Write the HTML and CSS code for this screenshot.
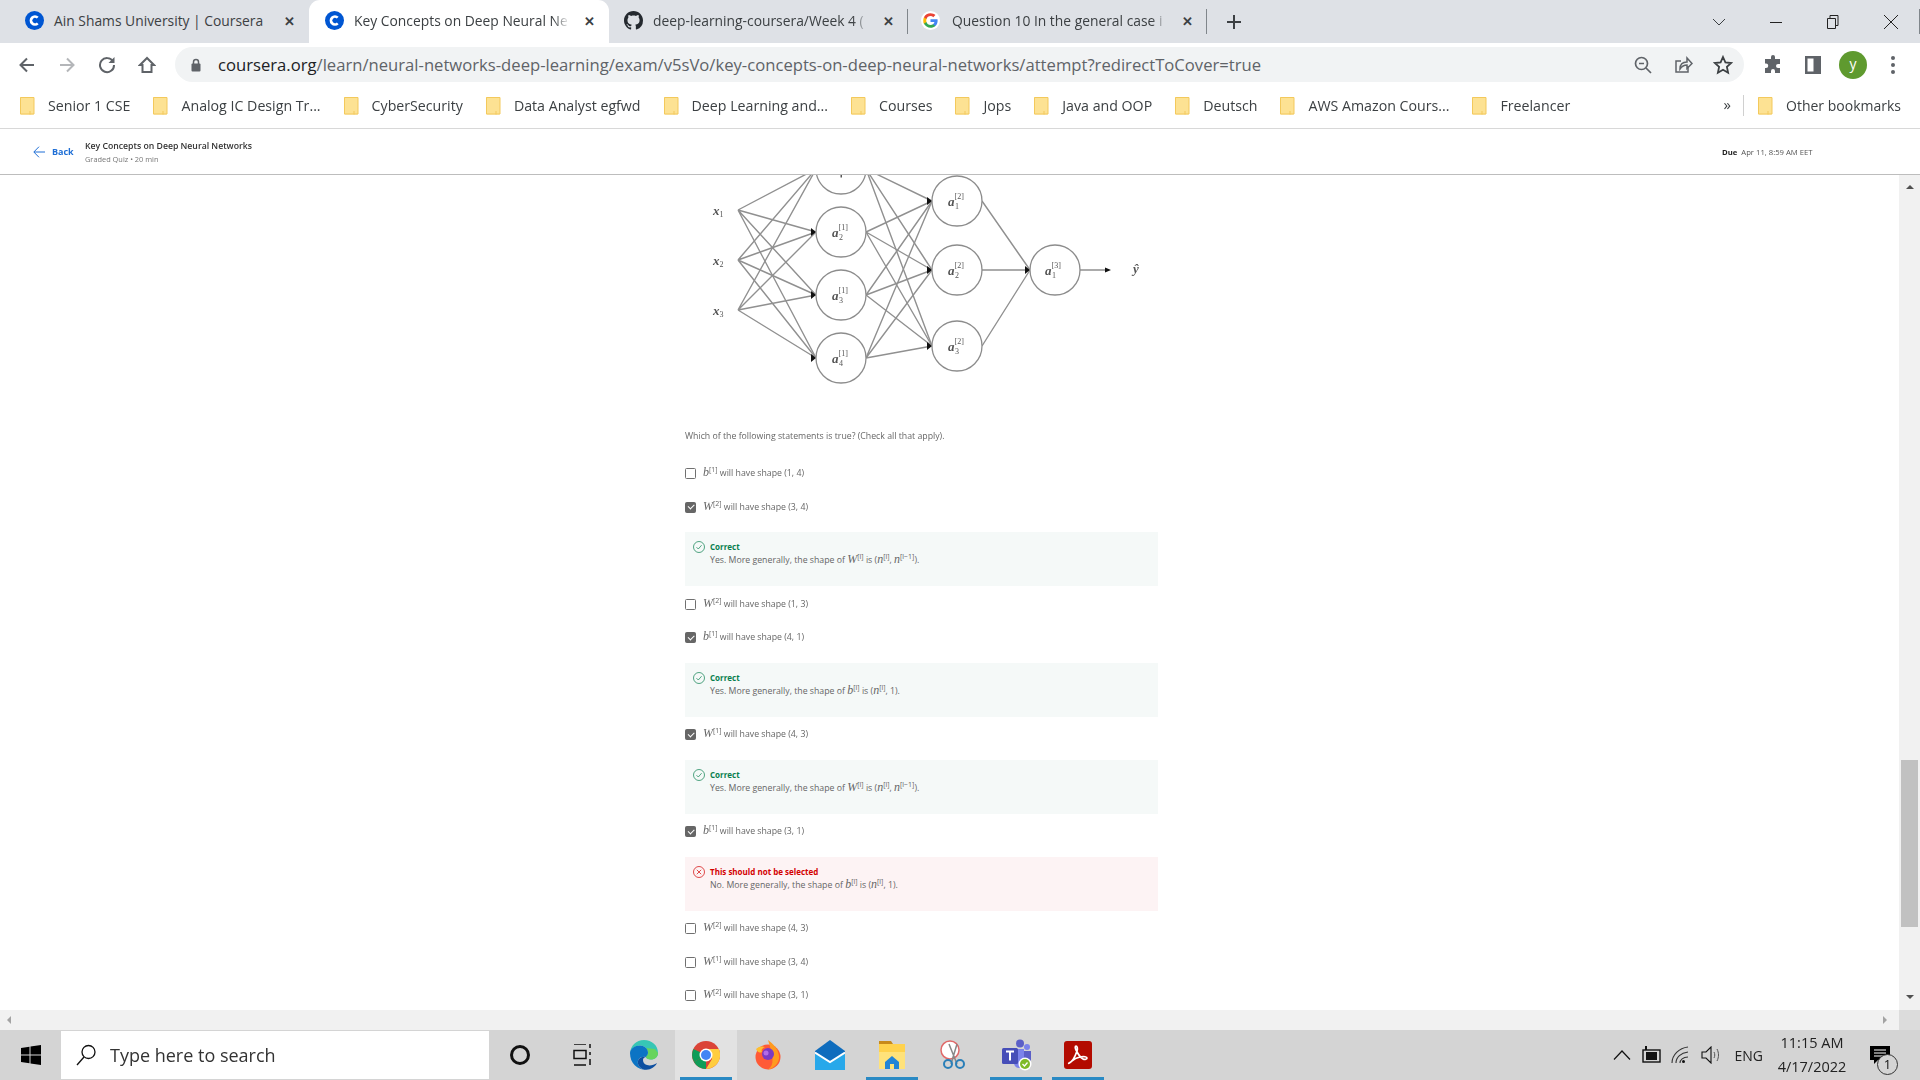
FILE: index.html
```html
<!DOCTYPE html>
<html>
<head>
    <meta charset="UTF-8">
    <title>Key Concepts on Deep Neural Networks | Coursera</title>
    <link rel="stylesheet" href="styles.css">
</head>
<body>
    <svg class="defs" width="0" height="0">
        <symbol id="i-coursera" viewBox="0 0 20 20"><circle cx="10" cy="10" r="10" fill="#0056d2"/><path d="M13.4 7a4.2 4.2 0 1 0 0 6" fill="none" stroke="#fff" stroke-width="2.8"/></symbol>
        <symbol id="i-folder" viewBox="0 0 15 18"><path d="M1 0h8l5 0v16.500q0 1-1 1H1q-1 0-1-1V1q0-1 1-1z" fill="#fde293"/><path d="M.5.500h13.500v16.500H.5zM10 14v3.500" fill="none" stroke="#f3c95c"/></symbol>
    </svg>

    <!-- tab strip -->
    <div class="tabstrip">
        <div class="tab">
            <svg class="favicon"><use href="#i-coursera"/></svg>
            <span class="tab-title tab-title-full">Ain Shams University | Coursera</span>
            <span class="tab-close">✕</span>
        </div>
        <div class="tab tab-active">
            <svg class="favicon"><use href="#i-coursera"/></svg>
            <span class="tab-title">Key Concepts on Deep Neural Ne</span>
            <span class="tab-close">✕</span>
        </div>
        <div class="tab tab-sep">
            <svg class="favicon" viewBox="0 0 16 16"><path fill="#24292f" d="M8 0C3.580 0 0 3.580 0 8c0 3.540 2.290 6.530 5.470 7.590.4.070.55-.17.55-.38 0-.19-.01-.82-.01-1.490-2.010.37-2.530-.49-2.690-.94-.09-.23-.48-.94-.82-1.130-.28-.15-.68-.52-.01-.53.63-.01 1.080.58 1.230.82.72 1.210 1.870.87 2.330.66.07-.52.28-.87.51-1.070-1.780-.2-3.640-.89-3.640-3.950 0-.87.31-1.590.82-2.150-.08-.2-.36-1.020.08-2.120 0 0 .67-.21 2.200.82.64-.18 1.320-.27 2-.27.68 0 1.360.09 2 .27 1.530-1.040 2.200-.82 2.200-.82.44 1.100.16 1.920.08 2.120.51.56.82 1.270.82 2.150 0 3.070-1.870 3.750-3.650 3.950.29.25.54.73.54 1.480 0 1.070-.01 1.930-.01 2.200 0 .21.15.46.55.38A8.013 8.013 0 0 0 16 8c0-4.420-3.580-8-8-8z"/></svg>
            <span class="tab-title">deep-learning-coursera/Week 4 (</span>
            <span class="tab-close">✕</span>
        </div>
        <div class="tab tab-sep tab-google">
            <svg class="favicon" viewBox="0 0 24 24"><circle cx="12" cy="12" r="12" fill="#fff"/><path fill="#4285f4" d="M21 12.200c0-.7-.06-1.300-.18-1.900H12v3.600h5c-.2 1.200-.9 2.100-1.900 2.800v2.300h3.100C20 17.300 21 15 21 12.200z"/><path fill="#34a853" d="M12 21.200c2.500 0 4.600-.8 6.200-2.200l-3.100-2.300c-.8.6-1.900.9-3.100.9-2.400 0-4.400-1.600-5.100-3.800H3.700v2.400c1.600 3 4.700 5 8.300 5z"/><path fill="#fbbc05" d="M6.900 13.800c-.4-1.100-.4-2.400 0-3.600V7.800H3.700c-1.100 2.100-1.100 6.300 0 8.400z"/><path fill="#ea4335" d="M12 6.400c1.400 0 2.600.5 3.500 1.400l2.700-2.700C16.600 3.700 14.500 2.800 12 2.800c-3.600 0-6.700 2-8.300 5l3.200 2.400c.7-2.200 2.700-3.800 5.100-3.800z"/></svg>
            <span class="tab-title">Question 10 In the general case i</span>
            <span class="tab-close">✕</span>
        </div>
        <div class="tab-new tab-sep-left">
            <svg width="16" height="16" viewBox="0 0 16 16"><path d="M8 1v14M1 8h14" stroke="#3c4043" stroke-width="2"/></svg>
        </div>
        <div class="win-buttons">
            <svg class="win-caret" width="14" height="8" viewBox="0 0 14 8"><path d="M1 1l6 6 6-6" fill="none" stroke="#3c4043"/></svg>
            <svg class="win-btn" width="14" height="14" viewBox="0 0 14 14"><path d="M1 7.500h12" stroke="#222"/></svg>
            <svg class="win-btn" width="14" height="14" viewBox="0 0 14 14"><path d="M1.500 3.500h8v10h-8zM4 3.500V.5h8v10H9.500" fill="none" stroke="#222"/></svg>
            <svg class="win-btn" width="16" height="16" viewBox="0 0 16 16"><path d="M1 1l14 14M15 1L1 15" stroke="#222"/></svg>
        </div>
    </div>

    <!-- address bar -->
    <div class="toolbar">
        <div class="tool"><svg width="18" height="18" viewBox="0 0 18 18"><path d="M16 9H3M9 2.500L2.500 9 9 15.500" fill="none" stroke="#5f6368" stroke-width="2"/></svg></div>
        <div class="tool"><svg width="18" height="18" viewBox="0 0 18 18"><path d="M2 9h13M9 2.500L15.500 9 9 15.500" fill="none" stroke="#b4b6b9" stroke-width="2"/></svg></div>
        <div class="tool"><svg width="18" height="18" viewBox="0 0 18 18"><path d="M15 5.500A7 7 0 1 0 16 9" fill="none" stroke="#5f6368" stroke-width="2"/><path d="M16.500 1v6h-6z" fill="#5f6368"/></svg></div>
        <div class="tool"><svg width="18" height="18" viewBox="0 0 18 18"><path d="M9 2L2 9h2.500v7h9V9H16z" fill="none" stroke="#5f6368" stroke-width="2"/></svg></div>
        <div class="omnibox">
            <svg class="lock" width="12" height="14" viewBox="0 0 12 14"><path d="M3.500 6V4a2.500 2.500 0 0 1 5 0v2" fill="none" stroke="#5f6368" stroke-width="1.500"/><rect x="1.500" y="5.500" width="9" height="8" rx="1" fill="#5f6368"/></svg>
            <span class="url"><span class="url-host">coursera.org</span>/learn/neural-networks-deep-learning/exam/v5sVo/key-concepts-on-deep-neural-networks/attempt?redirectToCover=true</span>
            <div class="tool"><svg width="20" height="20" viewBox="0 0 20 20"><circle cx="8.500" cy="8.500" r="6" fill="none" stroke="#5f6368" stroke-width="1.700"/><path d="M13 13l5 5M6 8.500h5" stroke="#5f6368" stroke-width="1.700"/></svg></div>
            <div class="tool"><svg width="20" height="20" viewBox="0 0 20 20"><path d="M15 11v6H3V6h5" fill="none" stroke="#5f6368" stroke-width="1.500"/><path d="M7 14c0-5 3-7 7-7V3l5 5.500-5 5V10c-3 0-5 1-7 4z" fill="none" stroke="#5f6368" stroke-width="1.500"/></svg></div>
            <div class="tool"><svg width="20" height="20" viewBox="0 0 20 20"><path d="M10 2l2.400 5.400 5.800.6-4.300 3.900 1.200 5.800L10 14.800l-5.100 2.900 1.200-5.800L1.800 8l5.800-.6z" fill="none" stroke="#3c4043" stroke-width="1.800"/></svg></div>
        </div>
        <div class="tool"><svg width="20" height="20" viewBox="0 0 20 20"><path fill="#5f6368" d="M8 2a2 2 0 0 1 4 0v2h5v5h-2a2 2 0 0 0 0 4h2v5h-5v-2a2 2 0 0 0-4 0v2H2v-5h1a2.200 2.200 0 0 0 0-4.500H2V4h6z"/></svg></div>
        <div class="tool"><svg width="18" height="20" viewBox="0 0 18 20"><path fill="#5f6368" d="M1 1h16v18H1zm2.500 2.500v13h6v-13z"/></svg></div>
        <div class="tool"><span class="avatar">y</span></div>
        <div class="tool"><svg width="4" height="18" viewBox="0 0 4 18"><circle cx="2" cy="2" r="2" fill="#5f6368"/><circle cx="2" cy="9" r="2" fill="#5f6368"/><circle cx="2" cy="16" r="2" fill="#5f6368"/></svg></div>
    </div>

    <!-- bookmarks -->
    <div class="bookmarks">
        <div class="bookmark"><svg class="folder"><use href="#i-folder"/></svg>Senior 1 CSE</div>
        <div class="bookmark"><svg class="folder"><use href="#i-folder"/></svg>Analog IC Design Tr...</div>
        <div class="bookmark"><svg class="folder"><use href="#i-folder"/></svg>CyberSecurity</div>
        <div class="bookmark"><svg class="folder"><use href="#i-folder"/></svg>Data Analyst egfwd</div>
        <div class="bookmark"><svg class="folder"><use href="#i-folder"/></svg>Deep Learning and...</div>
        <div class="bookmark"><svg class="folder"><use href="#i-folder"/></svg>Courses</div>
        <div class="bookmark"><svg class="folder"><use href="#i-folder"/></svg>Jops</div>
        <div class="bookmark"><svg class="folder"><use href="#i-folder"/></svg>Java and OOP</div>
        <div class="bookmark"><svg class="folder"><use href="#i-folder"/></svg>Deutsch</div>
        <div class="bookmark"><svg class="folder"><use href="#i-folder"/></svg>AWS Amazon Cours...</div>
        <div class="bookmark"><svg class="folder"><use href="#i-folder"/></svg>Freelancer</div>
        <div class="bookmark-more">»</div>
        <div class="bookmark bookmark-other"><svg class="folder"><use href="#i-folder"/></svg>Other bookmarks</div>
    </div>

    <!-- quiz header -->
    <div class="course-head">
        <a class="back"><svg width="12" height="12" viewBox="0 0 12 12"><path d="M12 6H1M6 .7L.8 6 6 11.300" fill="none" stroke="#1f6fd6"/></svg>Back</a>
        <div class="course-info">
            <div class="course-title">Key Concepts on Deep Neural Networks</div>
            <div class="course-sub">Graded Quiz • 20 min</div>
        </div>
        <div class="due"><b>Due</b> Apr 11, 8:59 AM EET</div>
    </div>

    <div class="view">
        <div class="scroll-area">
            <div class="question">
                <svg class="network" width="480" height="240" viewBox="680 175 480 240">
                    <g class="edges">
                        <path d="M738 210L816 169M738 210L816 232M738 210L816 295M738 210L816 358"/>
                        <path d="M738 260L816 169M738 260L816 232M738 260L816 295M738 260L816 358"/>
                        <path d="M738 310L816 169M738 310L816 232M738 310L816 295M738 310L816 358"/>
                        <path d="M866 169L932 201M866 169L932 270M866 169L932 346"/>
                        <path d="M866 232L932 201M866 232L932 270M866 232L932 346"/>
                        <path d="M866 295L932 201M866 295L932 270M866 295L932 346"/>
                        <path d="M866 358L932 201M866 358L932 270M866 358L932 346"/>
                        <path d="M982 201L1030 270M982 270L1030 270M982 346L1030 270M1080 270H1106"/>
                    </g>
                    <g class="heads">
                        <path d="M811 228l5 4-5 4zM811 291l5 4-5 4zM811 354l5 4-5 4z"/>
                        <path d="M927 197l5 4-5 4zM927 266l5 4-5 4zM927 342l5 4-5 4z"/>
                        <path d="M1025 266l5 4-5 4zM1105 267.500l6 2.500-6 2.500z"/>
                    </g>
                    <g class="nodes">
                        <circle cx="841" cy="169" r="25"/>
                        <circle cx="841" cy="232" r="25"/>
                        <circle cx="841" cy="295" r="25"/>
                        <circle cx="841" cy="358" r="25"/>
                        <circle cx="957" cy="201" r="25"/>
                        <circle cx="957" cy="270" r="25"/>
                        <circle cx="957" cy="346" r="25"/>
                        <circle cx="1055" cy="270" r="25"/>
                    </g>
                    <rect x="840.500" y="175" width="1.500" height="2.500" fill="#555"/>
                    <g class="labels">
                        <text x="713" y="215">x<tspan class="lab-sm" dy="2">1</tspan></text>
                        <text x="713" y="265">x<tspan class="lab-sm" dy="2">2</tspan></text>
                        <text x="713" y="315">x<tspan class="lab-sm" dy="2">3</tspan></text>
                        <text x="832" y="237">a<tspan class="lab-sm" dy="-7">[1]</tspan></text><text class="lab-sm" x="839" y="240">2</text>
                        <text x="832" y="300">a<tspan class="lab-sm" dy="-7">[1]</tspan></text><text class="lab-sm" x="839" y="303">3</text>
                        <text x="832" y="363">a<tspan class="lab-sm" dy="-7">[1]</tspan></text><text class="lab-sm" x="839" y="366">4</text>
                        <text x="948" y="206">a<tspan class="lab-sm" dy="-7">[2]</tspan></text><text class="lab-sm" x="955" y="209">1</text>
                        <text x="948" y="275">a<tspan class="lab-sm" dy="-7">[2]</tspan></text><text class="lab-sm" x="955" y="278">2</text>
                        <text x="948" y="351">a<tspan class="lab-sm" dy="-7">[2]</tspan></text><text class="lab-sm" x="955" y="354">3</text>
                        <text x="1045" y="275">a<tspan class="lab-sm" dy="-7">[3]</tspan></text><text class="lab-sm" x="1052" y="278">1</text>
                        <text x="1133" y="273">ŷ</text>
                    </g>
                </svg>
                <p class="prompt">Which of the following statements is true? (Check all that apply).</p>

                <label class="option"><span class="check"></span><span><i>b</i><sup>[1]</sup> will have shape (1, 4)</span></label>
                <label class="option"><span class="check checked"></span><span><i>W</i><sup>[2]</sup> will have shape (3, 4)</span></label>
                <div class="feedback ok">
                    <svg class="fb-icon" viewBox="0 0 12 12"><circle cx="6" cy="6" r="5.500"/><path d="M3.500 6.200l1.800 1.800 3.300-3.800"/></svg>
                    <div class="fb-title">Correct</div>
                    <div class="fb-text">Yes. More generally, the shape of <i>W</i><sup>[l]</sup> is (<i>n</i><sup>[l]</sup>, <i>n</i><sup>[l−1]</sup>).</div>
                </div>
                <label class="option"><span class="check"></span><span><i>W</i><sup>[2]</sup> will have shape (1, 3)</span></label>
                <label class="option"><span class="check checked"></span><span><i>b</i><sup>[1]</sup> will have shape (4, 1)</span></label>
                <div class="feedback ok">
                    <svg class="fb-icon" viewBox="0 0 12 12"><circle cx="6" cy="6" r="5.500"/><path d="M3.500 6.200l1.800 1.800 3.300-3.800"/></svg>
                    <div class="fb-title">Correct</div>
                    <div class="fb-text">Yes. More generally, the shape of <i>b</i><sup>[l]</sup> is (<i>n</i><sup>[l]</sup>, 1).</div>
                </div>
                <label class="option"><span class="check checked"></span><span><i>W</i><sup>[1]</sup> will have shape (4, 3)</span></label>
                <div class="feedback ok">
                    <svg class="fb-icon" viewBox="0 0 12 12"><circle cx="6" cy="6" r="5.500"/><path d="M3.500 6.200l1.800 1.800 3.300-3.800"/></svg>
                    <div class="fb-title">Correct</div>
                    <div class="fb-text">Yes. More generally, the shape of <i>W</i><sup>[l]</sup> is (<i>n</i><sup>[l]</sup>, <i>n</i><sup>[l−1]</sup>).</div>
                </div>
                <label class="option"><span class="check checked"></span><span><i>b</i><sup>[1]</sup> will have shape (3, 1)</span></label>
                <div class="feedback bad">
                    <svg class="fb-icon" viewBox="0 0 12 12"><circle cx="6" cy="6" r="5.500"/><path d="M3.800 3.800l4.400 4.400M8.200 3.800L3.800 8.200"/></svg>
                    <div class="fb-title">This should not be selected</div>
                    <div class="fb-text">No. More generally, the shape of <i>b</i><sup>[l]</sup> is (<i>n</i><sup>[l]</sup>, 1).</div>
                </div>
                <label class="option"><span class="check"></span><span><i>W</i><sup>[2]</sup> will have shape (4, 3)</span></label>
                <label class="option"><span class="check"></span><span><i>W</i><sup>[1]</sup> will have shape (3, 4)</span></label>
                <label class="option"><span class="check"></span><span><i>W</i><sup>[2]</sup> will have shape (3, 1)</span></label>
            </div>
        </div>
        <div class="vscroll">
            <span class="arrow-up"></span>
            <span class="thumb"></span>
            <span class="arrow-down"></span>
        </div>
    </div>
    <div class="hscroll">
        <span class="arrow-left"></span>
        <span class="arrow-right"></span>
        <span class="corner"></span>
    </div>

    <!-- windows taskbar -->
    <div class="taskbar">
        <div class="start"><svg width="20" height="20" viewBox="0 0 20 20"><path d="M0 3l8.500-1.300V9.500H0zM9.500 1.500L20 0v9.500H9.500zM0 10.500h8.500v7.800L0 17zM9.500 10.500H20V20L9.500 18.500z" fill="#000"/></svg></div>
        <div class="search">
            <svg width="24" height="24" viewBox="0 0 24 24"><circle cx="14.500" cy="9" r="6.500" fill="none" stroke="#111" stroke-width="1.300"/><path d="M10 14L3 22" stroke="#111" stroke-width="1.300"/></svg>
            <span>Type here to search</span>
        </div>
        <div class="slot"><svg width="22" height="22" viewBox="0 0 22 22"><circle cx="11" cy="11" r="8.500" fill="none" stroke="#111" stroke-width="3"/></svg></div>
        <div class="slot"><svg width="22" height="22" viewBox="0 0 22 22"><path d="M3 0h12M3 21h12M3 6.500h12v8H3zM19 0v4M19 8v3M19 15v6" fill="none" stroke="#111" stroke-width="1.500"/></svg></div>
        <div class="slot"><svg width="30" height="30" viewBox="0 0 30 30"><path d="M15 0c8 0 14 5.500 14 13 0 4-3 6.500-7 6.500-3 0-5-1-5-2.500 0-1 2-1.500 2-4.500 0-4-4-7-8-7C6 5.500 1 10 1 13 2 5.500 7 0 15 0z" fill="#37c6b5"/><path d="M29 13c0 3-2.500 6.500-7 6.500-3 0-5-1-5-2.500 0-1 2-1.500 2-4.500 0-2-1-3.500-2-4.500l9 1z" fill="#67d45e"/><path d="M1 13c0-4 5-7.500 10-7.500 4 0 8 3 8 7 0 3-2 3.500-2 4.500-6-1-9 3-8 7 1 3 4 6 9 6C8 30 1 23 1 13z" fill="#0c74c4"/><path d="M9 24c1 3 4 6 8.500 5.800C22 29.500 26 27 28 23c-3 2-7 3-10 2-3-.8-4-3-4-5 0-1 .5-2.500 3-3-5-1-9 2-8 7z" fill="#0d4fa0"/></svg></div>
        <div class="slot slot-active slot-running"><svg width="28" height="28" viewBox="0 0 28 28"><circle cx="14" cy="14" r="14" fill="#db4437"/><path d="M14 14L2 21a14 14 0 0 0 12 7z" fill="#0f9d58"/><path d="M14 14L2 21A14 14 0 0 1 1.500 8z" fill="#0f9d58"/><path d="M14 8h12.800A14 14 0 0 1 14 28l6-10z" fill="#ffcd40"/><circle cx="14" cy="14" r="6.500" fill="#fff"/><circle cx="14" cy="14" r="5" fill="#4285f4"/></svg></div>
        <div class="slot"><svg width="30" height="30" viewBox="0 0 30 30"><circle cx="15" cy="17" r="12.500" fill="#ff5a36"/><path d="M15 0c5 4 10 8 11 16 1 7-6 13-11 13.500C22 25 20 16 15 0z" fill="#ff9a1f"/><path d="M3 9c3-3 6-3 9-2-3 1-4 3-3 5-2 1-4 1-6-3z" fill="#ffbd2e"/><circle cx="15" cy="14" r="6" fill="#7b3ac4"/><circle cx="13" cy="13" r="2.500" fill="#b36be8"/></svg></div>
        <div class="slot"><svg width="30" height="30" viewBox="0 0 30 30"><path d="M0 11h30v19H0z" fill="#28a8ea"/><path d="M15 0l15 11v2L15 22 0 13v-2z" fill="#0f6cbd"/><path d="M0 12.500l15 9.500 15-9.500" fill="none" stroke="#fff" stroke-width="2"/></svg></div>
        <div class="slot slot-running"><svg width="28" height="30" viewBox="0 0 28 30"><path d="M1 1h12l2 3h-14z" fill="#c88a1a"/><path d="M1 4h26v25H1z" fill="#ffd24d"/><path d="M1 12h26v17H1z" fill="#ffe27a"/><path d="M7 22l7-6 7 6v7H7z" fill="#2384d6"/><path d="M12 24h4v5h-4z" fill="#ffe27a"/></svg></div>
        <div class="slot"><svg width="30" height="30" viewBox="0 0 30 30"><circle cx="11" cy="10" r="9" fill="#fff" stroke="#e06a6a" stroke-width="1.500"/><path d="M10 4l8 20M18 4l-6 20" stroke="#888" stroke-width="1.500"/><circle cx="9" cy="24" r="4" fill="none" stroke="#2a7fb8" stroke-width="2"/><circle cx="21" cy="24" r="4" fill="none" stroke="#2a7fb8" stroke-width="2"/></svg></div>
        <div class="slot slot-running"><svg width="32" height="32" viewBox="0 0 32 32"><circle cx="20" cy="4.500" r="4" fill="#5b5fc7"/><circle cx="27" cy="8" r="3" fill="#7b83eb"/><path d="M14 10h10v14a5 5 0 0 1-10 0z" fill="#7b83eb"/><path d="M24 12h7v9a4 4 0 0 1-7 0z" fill="#5b5fc7"/><rect x="2" y="9" width="16" height="16" rx="1.500" fill="#464eb8"/><path d="M6 12.500h8M10 12.500V21.500" stroke="#fff" stroke-width="2"/><circle cx="25" cy="25" r="6.500" fill="#fff"/><circle cx="25" cy="25" r="5" fill="#7fba28"/><path d="M22.500 25l2 2 3-3.500" fill="none" stroke="#fff" stroke-width="1.300"/></svg></div>
        <div class="slot slot-running"><svg width="28" height="28" viewBox="0 0 28 28"><rect width="28" height="28" rx="3" fill="#b30b00"/><path d="M5 22c3-1 6-6 8-12 1-3 0-5-1-5s-1 2 0 4c2 4 5 8 7 9s4 0 4-1-3-2-7-1c-3 .6-6 2-8 4-2 2-4 3-3 2z" fill="none" stroke="#fff" stroke-width="1.700"/></svg></div>
        <div class="tray">
            <svg width="18" height="10" viewBox="0 0 18 10"><path d="M1 9.500L9 1l8 8.500" fill="none" stroke="#111" stroke-width="1.200"/></svg>
            <svg width="20" height="18" viewBox="0 0 20 18"><path d="M5 0v4" stroke="#111" stroke-width="2"/><rect x="2" y="4" width="17" height="12" fill="none" stroke="#111" stroke-width="1.400"/><rect x="5" y="6" width="11" height="8" fill="#111"/></svg>
            <svg width="20" height="20" viewBox="0 0 20 20"><path d="M1 18C1 10 8 3 17 2M5 18c0-6 5-10 12-11M9 18c0-3 3-6 8-6" fill="none" stroke="#333" stroke-width="1.100"/><circle cx="12.500" cy="16.500" r="1.500" fill="#111"/></svg>
            <svg width="20" height="18" viewBox="0 0 20 18"><path d="M1 6h4l5-5v16l-5-5H1z" fill="none" stroke="#111" stroke-width="1.100"/><path d="M13 6c1 2 1 4 0 6M16 3c2 4 2 8 0 12" fill="none" stroke="#555"/></svg>
            <span class="lang">ENG</span>
            <div class="clock"><div>11:15 AM</div><div>4/17/2022</div></div>
            <div class="notify">
                <svg width="20" height="18" viewBox="0 0 20 18"><path d="M0 0h20v14H8l-4 4v-4H0z" fill="#000"/><path d="M4 4h12M4 7h12M4 10h12" stroke="#fff"/></svg>
                <span class="badge">1</span>
            </div>
        </div>
    </div>
</body>
</html>
```

FILE: styles.css
```css
html, body { margin: 0; padding: 0; height: 100%; }
body { display: flex; flex-direction: column; height: 100vh; overflow: hidden; background: #fff; font-family: "Open Sans", "Noto Sans", sans-serif; color: #3c4043; filter: blur(.25px); }
.defs { display: block; }

/* tabs */
.tabstrip { display: flex; height: 43px; padding-left: 10px; background: #dee1e6; box-sizing: border-box; flex: none; }
.tab { position: relative; display: flex; align-items: center; width: 299px; box-sizing: border-box; padding: 0 0 2px 15px; }
.tab-active { background: #fff; border-radius: 11px 11px 0 0; width: 300px; padding-left: 16px; }
.tab-google { padding-left: 13px; }
.tab-google .tab-title { margin-left: 12px; }
.tab-sep::after, .tab-sep-left::before { content: ""; position: absolute; right: 0; top: 9px; height: 25px; width: 1px; background: #80868b; }
.favicon { width: 19px; height: 19px; flex: none; }
.tab-title { width: 222px; margin-left: 10px; font-size: 13.850px; white-space: nowrap; -webkit-mask-image: linear-gradient(to right, #000 90%, transparent 97%); mask-image: linear-gradient(to right, #000 90%, transparent 97%); }
.tab-title-full { -webkit-mask-image: none; mask-image: none; }
.tab-close { width: 20px; margin-left: 3px; text-align: center; font-size: 13px; font-weight: bold; color: #3c4043; }
.tab-new { display: flex; align-items: center; margin-left: 19px; }
.win-buttons { display: flex; align-items: center; margin-left: auto; }
.win-caret { margin-right: 43px; }
.win-btn { margin-right: 43px; }
.win-btn:last-child { margin-right: 21px; }

/* toolbar */
.toolbar { display: flex; align-items: center; height: 43px; padding-left: 7px; background: #fff; flex: none; }
.tool { display: flex; align-items: center; justify-content: center; width: 40px; height: 35px; flex: none; }
.omnibox { display: flex; align-items: center; width: 1569px; height: 35px; margin: 0 9px 0 8px; padding: 0 1px 0 15px; box-sizing: border-box; background: #f1f3f4; border-radius: 18px; flex: none; }
.lock { flex: none; }
.url { flex: 1; margin-left: 16px; font-size: 16.650px; white-space: nowrap; color: #5f6368; }
.url-host { color: #202124; }
.avatar { display: block; width: 28px; height: 28px; border-radius: 50%; background: #5f9a2f; color: #fff; font-size: 14px; line-height: 26px; text-align: center; }

/* bookmarks */
.bookmarks { display: flex; align-items: center; height: 43px; padding: 0 19px 3px 20px; box-sizing: border-box; border-bottom: 1px solid #d8d8d8; flex: none; }
.bookmark { display: flex; align-items: center; margin-right: 23px; font-size: 14.200px; white-space: nowrap; color: #3c4043; }
.folder { width: 15px; height: 18px; margin-right: 13px; flex: none; }
.bookmark-more { margin-left: auto; padding-right: 12px; font-size: 15px; border-right: 1px solid #d0d0d0; height: 21px; line-height: 18px; }
.bookmark-other { margin: 0 0 0 14px; font-size: 14px; }

/* course header */
.course-head { display: flex; align-items: center; height: 46px; padding-left: 33px; box-sizing: border-box; border-bottom: 1px solid #bdbdbd; flex: none; }
.back { display: flex; align-items: center; gap: 7px; width: 52px; font-size: 9px; font-weight: 700; color: #1f6fd6; }
.course-info { padding-top: 2px; color: #333; }
.course-title { font-size: 8.700px; font-weight: 600; line-height: 13px; }
.course-sub { font-size: 7.400px; color: #777; line-height: 13px; }
.due { margin-left: auto; width: 198px; font-size: 7.700px; color: #555; }
.due b { color: #222; margin-right: 2px; }

/* question */
.view { display: flex; flex: 1; min-height: 0; }
.scroll-area { flex: 1; overflow: hidden; }
.question { width: 473px; margin-left: 685px; font-size: 8.750px; color: #666; filter: blur(.2px); }
.network { display: block; margin-left: -5px; }
.edges path { fill: none; stroke: #909090; stroke-width: 1.400; }
.heads path { fill: #111; }
.nodes circle { fill: #fff; stroke: #8c8c8c; stroke-width: 1.300; }
.labels text { font-family: "Liberation Serif", serif; font-style: italic; font-size: 13px; fill: #555; font-weight: bold; }
.labels .lab-sm { font-size: 8px; font-style: normal; font-weight: normal; }
.prompt { margin: 14px 0 12.500px; font-size: 8.750px; line-height: 14px; }
.option { display: flex; align-items: center; gap: 7px; height: 12.500px; padding: 11px 0 10px; line-height: 12px; }
.check { display: flex; width: 9px; height: 9px; margin-top: 2px; border: 1.500px solid #707070; border-radius: 1.500px; background: #fff; flex: none; }
.checked { background: #666; border-color: #666; }
.checked::after { content: ""; width: 5px; height: 2.500px; margin: 1.500px 0 0 1.500px; border-left: 1.500px solid #fff; border-bottom: 1.500px solid #fff; transform: rotate(-45deg); }
.option i, .fb-text i { font-family: "Liberation Serif", serif; font-size: 12px; }
sup { font-size: 7px; line-height: 0; }
.feedback { position: relative; height: 54px; margin-top: 9.500px; padding: 9px 0 0 25px; box-sizing: border-box; line-height: 12px; }
.feedback.ok { background: #f5f9f8; }
.feedback.bad { background: #fdf3f4; }
.fb-icon { position: absolute; left: 8px; top: 9px; width: 12px; height: 12px; fill: none; stroke-width: .7; }
.ok .fb-icon { stroke: #0a7f4f; }
.bad .fb-icon { stroke: #d30000; }
.fb-title { font-size: 8px; font-weight: 700; }
.ok .fb-title { color: #0a7f4f; }
.bad .fb-title { color: #d30000; }

/* scrollbars */
.vscroll { display: flex; flex-direction: column; align-items: center; width: 21px; padding-top: 10px; box-sizing: border-box; background: #f1f1f1; flex: none; }
.arrow-up { width: 0; height: 0; border: 4.500px solid transparent; border-top: 0; border-bottom-color: #505050; }
.thumb { width: 17px; height: 167px; margin-top: 571px; background: #c1c1c1; }
.arrow-down { width: 0; height: 0; margin-top: 68px; border: 4.500px solid transparent; border-bottom: 0; border-top-color: #505050; }
.hscroll { display: flex; align-items: center; height: 20px; padding-left: 7px; background: #f1f1f1; flex: none; }
.arrow-left { width: 0; height: 0; border: 4.500px solid transparent; border-left: 0; border-right-color: #a3a3a3; }
.arrow-right { width: 0; height: 0; margin-left: auto; margin-right: 12px; border: 4.500px solid transparent; border-right: 0; border-left-color: #a3a3a3; }
.corner { width: 21px; height: 20px; background: #dcdcdc; }

/* taskbar */
.taskbar { display: flex; align-items: center; height: 50px; background: #d4d4d4; flex: none; color: #111; }
.start { display: flex; justify-content: center; width: 61px; }
.search { display: flex; align-items: center; gap: 12px; width: 428px; height: 48px; padding-left: 13px; box-sizing: border-box; background: #fff; font-size: 18px; color: #333; }
.slot { position: relative; display: flex; align-items: center; justify-content: center; width: 62px; height: 50px; flex: none; }
.slot-running::after { content: ""; position: absolute; left: 5px; right: 5px; bottom: 0; height: 3px; background: #2a8ac4; }
.slot-active { background: #e2e2e2; }
.tray { display: flex; align-items: center; margin-left: auto; padding-right: 30px; gap: 10px; }
.lang { margin-left: 4px; font-size: 14px; color: #222; }
.clock { width: 72px; margin-left: 3px; font-size: 14.500px; line-height: 24px; text-align: center; white-space: nowrap; color: #222; }
.notify { position: relative; display: flex; justify-content: center; width: 20px; margin-left: 12px; }
.badge { position: absolute; left: 7px; top: 8px; width: 19px; height: 19px; border: 1px solid #333; border-radius: 50%; background: #d4d4d4; font-size: 13px; line-height: 19px; text-align: center; color: #111; }
```
